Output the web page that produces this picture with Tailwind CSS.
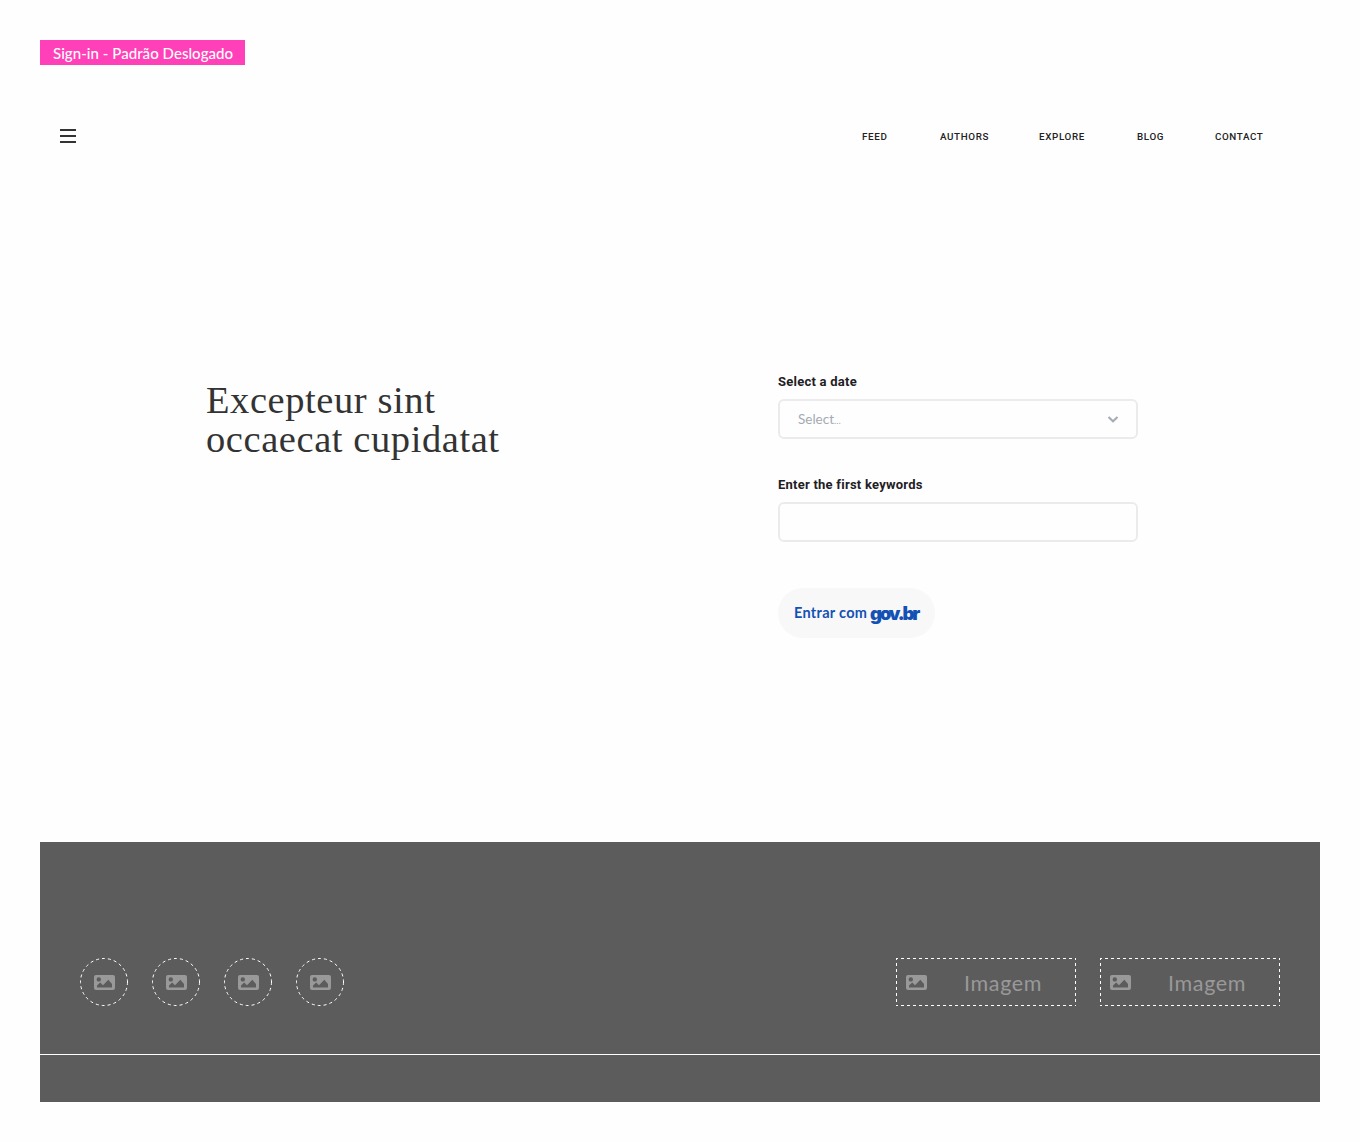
<!DOCTYPE html>
<html lang="pt-BR">
<head>
<meta charset="utf-8">
<title>Sign-in</title>
<script src="https://cdn.jsdelivr.net/npm/@tailwindcss/browser@4"></script>
</head>
<body class="bg-[#fefefe] font-['Lato',sans-serif]">
<svg class="hidden">
  <symbol id="image" viewBox="0 0 21 16"><path fill="currentColor" fill-rule="evenodd" d="M2 0H19Q21 0 21 2V13Q21 15 19 15H2Q0 15 0 13V2Q0 0 2 0ZM4.800 2.200A2.200 2.200 0 1 0 4.800 6.600A2.200 2.200 0 1 0 4.800 2.200ZM3 12.500H18V9L14.300 4.800L9 10.200L6.200 7.500L3 10.500Z"/></symbol>
  <symbol id="circle" viewBox="0 0 48 48"><circle cx="24" cy="24" r="23.500" fill="none" stroke="white" stroke-dasharray="3 3"/></symbol>
  <symbol id="frame" viewBox="0 0 180 48"><path d="M0 .5H180M0 47.500H180M.5 0V48M179.500 0V48" fill="none" stroke="white" stroke-dasharray="3 3" stroke-dashoffset="1"/></symbol>
</svg>
<div class="flex h-[1142px] w-[1360px] flex-col overflow-hidden p-10">
  <div class="flex h-[25px] w-[205px] items-center whitespace-nowrap bg-[#ff40b8] pl-[13px] pt-px text-[15px] font-medium tracking-[0.05px] text-white">Sign-in - Padrão Deslogado</div>

  <header class="mt-[47px] flex h-12 items-center justify-between pl-5 pr-[57px]">
    <button class="flex w-4 flex-col gap-1" aria-label="Menu">
      <span class="h-0.5 bg-[#333333]"></span><span class="h-0.5 bg-[#333333]"></span><span class="h-0.5 bg-[#333333]"></span>
    </button>
    <nav class="flex pt-0.5 font-['Roboto',sans-serif] text-[9.800px] font-medium text-[#222222]">
      <a class="w-[78px] tracking-[0.65px]">FEED</a><a class="w-[99px] tracking-[0.65px]">AUTHORS</a><a class="w-[98px] tracking-[0.65px]">EXPLORE</a><a class="w-[78px] tracking-[0.65px]">BLOG</a><a class="w-[48px] tracking-[0.6px]">CONTACT</a>
    </nav>
  </header>

  <main class="flex h-[682px] pl-[166px] pt-[214px]">
    <h1 class="w-[572px] pt-[7px] font-['Liberation_Serif',serif] text-[38.500px] leading-[39px] tracking-[0.58px] text-[#333333]">Excepteur sint<br>occaecat cupidatat</h1>
    <form class="flex w-[360px] flex-col items-start">
      <label class="h-[25px] pt-px font-['Roboto',sans-serif] text-[13px] font-bold leading-[14px] tracking-[0.24px] text-[#1f2024]">Select a date</label>
      <div class="flex h-10 w-full items-center justify-between rounded-md border-2 border-[#ebebeb] pl-[18px] pr-[17px] text-[13.500px] text-[#a3abb3]">
        <span>Select<span class="text-[9px]">…</span></span>
        <svg class="h-[7px] w-[12px]" viewBox="0 0 12 7" fill="none" stroke="#a3abb3" stroke-width="2"><path d="M1.500 1L6 5.300L10.500 1"/></svg>
      </div>
      <label class="mt-[38px] h-[25px] pt-px font-['Roboto',sans-serif] text-[13px] font-bold leading-[14px] tracking-[0.24px] text-[#1f2024]">Enter the first keywords</label>
      <input class="h-10 w-full rounded-md border-2 border-[#ebebeb]">
      <button type="button" class="mt-[46px] flex h-[50px] w-[157px] items-center whitespace-nowrap rounded-full bg-[#f8f8f8] pl-4 text-left text-[#1351b4]">
        <span class="w-[76px] pb-px text-[14.500px] font-bold tracking-[0.3px]">Entrar com</span>
        <span class="font-['Inter',sans-serif] text-[18.500px] font-black leading-5 tracking-[-2.200px]">gov.br</span>
      </button>
    </form>
  </main>

  <footer class="h-[260px] bg-[#5c5c5c] text-[#999999]">
    <div class="flex h-[213px] justify-between border-b border-white px-10 pt-[116px]">
      <div class="flex gap-6">
        <div class="grid size-12 place-items-center"><svg class="col-start-1 row-start-1 size-12"><use href="#circle"/></svg><svg class="col-start-1 row-start-1 ml-px mt-0.5 h-4 w-[21px]"><use href="#image"/></svg></div>
        <div class="grid size-12 place-items-center"><svg class="col-start-1 row-start-1 size-12"><use href="#circle"/></svg><svg class="col-start-1 row-start-1 ml-px mt-0.5 h-4 w-[21px]"><use href="#image"/></svg></div>
        <div class="grid size-12 place-items-center"><svg class="col-start-1 row-start-1 size-12"><use href="#circle"/></svg><svg class="col-start-1 row-start-1 ml-px mt-0.5 h-4 w-[21px]"><use href="#image"/></svg></div>
        <div class="grid size-12 place-items-center"><svg class="col-start-1 row-start-1 size-12"><use href="#circle"/></svg><svg class="col-start-1 row-start-1 ml-px mt-0.5 h-4 w-[21px]"><use href="#image"/></svg></div>
      </div>
      <div class="flex gap-6">
        <div class="relative flex h-12 w-[180px] items-center pl-[10px]"><svg class="absolute inset-0 h-12 w-[180px]"><use href="#frame"/></svg><svg class="mt-0.5 h-4 w-[21px]"><use href="#image"/></svg><span class="ml-[37px] pt-[3px] text-[21.500px] tracking-[0.65px]">Imagem</span></div>
        <div class="relative flex h-12 w-[180px] items-center pl-[10px]"><svg class="absolute inset-0 h-12 w-[180px]"><use href="#frame"/></svg><svg class="mt-0.5 h-4 w-[21px]"><use href="#image"/></svg><span class="ml-[37px] pt-[3px] text-[21.500px] tracking-[0.65px]">Imagem</span></div>
      </div>
    </div>
  </footer>
</div>
</body>
</html>
